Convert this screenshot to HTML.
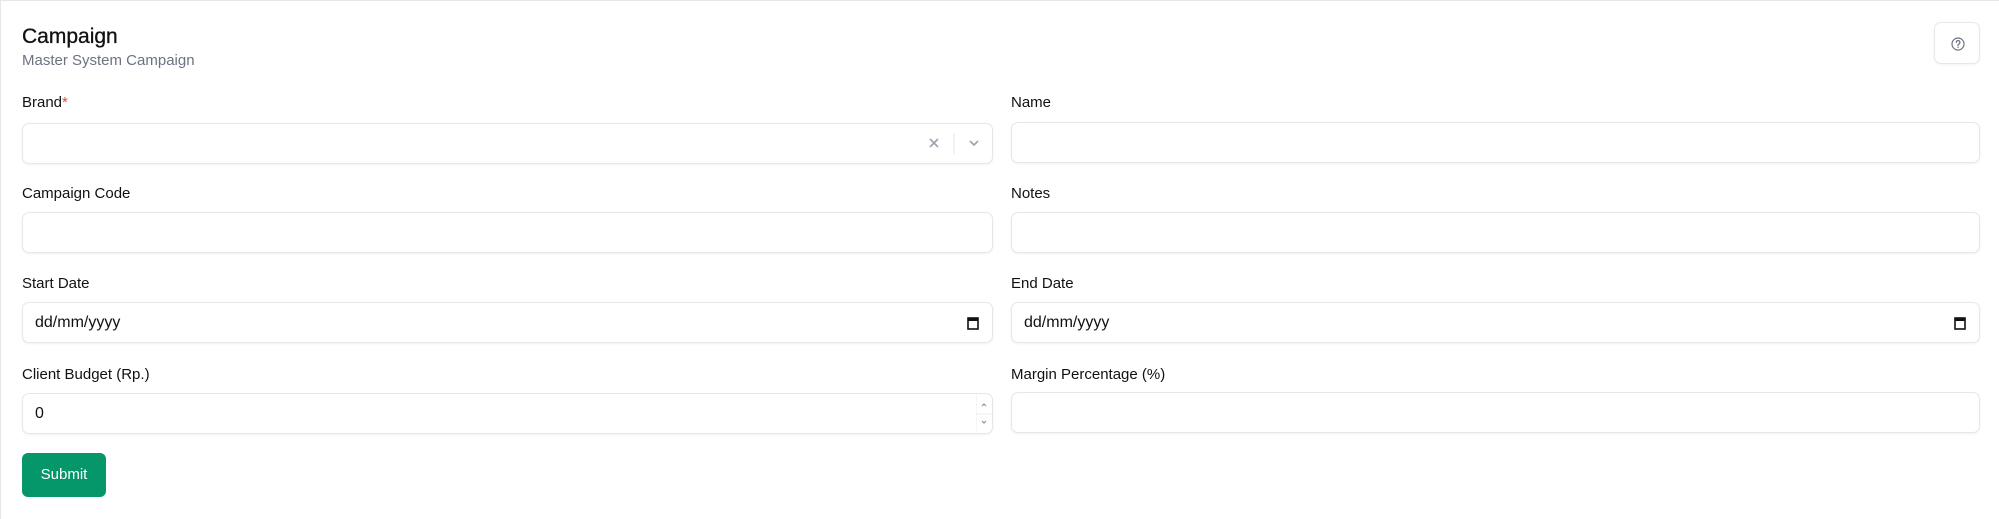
<!DOCTYPE html>
<html><head><meta charset="utf-8"><style>
*{box-sizing:border-box;margin:0;padding:0}
body{width:1999px;height:519px;background:#fff;font-family:"Liberation Sans",sans-serif;color:#111;position:relative;overflow:hidden}
.card{position:absolute;left:0;top:0;width:1999px;height:519px;border-top:1px solid #e5e7eb;border-left:1px solid #e5e7eb}
.abs{position:absolute}
.t{left:22px;top:25px;font-size:21px;font-weight:500;color:#111;-webkit-text-stroke:0.3px #111}
.st{left:22px;top:52px;font-size:15px;color:#6b7280}
.lbl{position:absolute;font-size:15px;font-weight:500;color:#111}
.inp{position:absolute;height:41px;border:1px solid #e5e7eb;border-radius:7px;box-shadow:0 1px 2px rgba(0,0,0,.06);background:#fff;font-size:16px;color:#111;padding-left:12px;line-height:39px}
.L{left:22px;width:971px}.R{left:1011px;width:969px}
.help{left:1934px;top:22px;width:46px;height:42px;border:1px solid #e5e7eb;border-radius:7px;box-shadow:0 1px 2px rgba(0,0,0,.05)}
.btn{left:22px;top:453px;width:84px;height:44px;background:#059669;border-radius:6px;color:#fff;font-size:15px;font-weight:500;text-align:center;line-height:44px}
</style></head><body>
<div class="card"></div>
<div class="abs t">Campaign</div>
<div class="abs st">Master System Campaign</div>
<div class="abs help"><svg width="46" height="42" viewBox="0 0 46 42"><circle cx="23" cy="21" r="6" fill="none" stroke="#6b7280" stroke-width="1.2"/><path d="M21.3 19.4a1.8 1.8 0 1 1 2.4 1.7c-.5.2-.7.6-.7 1.1v.4" fill="none" stroke="#6b7280" stroke-width="1.2" stroke-linecap="round"/><circle cx="23" cy="24.3" r=".7" fill="#6b7280"/></svg></div>

<div class="lbl" style="left:22px;top:94px">Brand<span style="color:#ef4444">*</span></div>
<div class="inp L" style="top:123px"><svg class="abs" style="right:0;top:0" width="80" height="39"><path d="M18 15l8 8M26 15l-8 8" stroke="#9ca3af" stroke-width="1.6"/><path d="M42 9v21" stroke="#e5e7eb" stroke-width="1"/><path d="M58 17l4 4 4-4" fill="none" stroke="#9ca3af" stroke-width="1.6"/></svg></div>
<div class="lbl" style="left:1011px;top:94px">Name</div>
<div class="inp R" style="top:122px"></div>

<div class="lbl" style="left:22px;top:185px">Campaign Code</div>
<div class="inp L" style="top:212px"></div>
<div class="lbl" style="left:1011px;top:185px">Notes</div>
<div class="inp R" style="top:212px"></div>

<div class="lbl" style="left:22px;top:275px">Start Date</div>
<div class="inp L" style="top:302px">dd/mm/yyyy<svg class="abs" style="right:12px;top:12px" width="14" height="16"><rect x="2" y="3" width="10" height="11" fill="none" stroke="#111" stroke-width="1.6"/><rect x="2" y="3" width="10" height="3" fill="#111"/></svg></div>
<div class="lbl" style="left:1011px;top:275px">End Date</div>
<div class="inp R" style="top:302px">dd/mm/yyyy<svg class="abs" style="right:12px;top:12px" width="14" height="16"><rect x="2" y="3" width="10" height="11" fill="none" stroke="#111" stroke-width="1.6"/><rect x="2" y="3" width="10" height="3" fill="#111"/></svg></div>

<div class="lbl" style="left:22px;top:366px">Client Budget (Rp.)</div>
<div class="inp L" style="top:393px">0<svg class="abs" style="right:0;top:0" width="16" height="40"><path d="M0 20h16" stroke="#eee"/><path d="M0 0v40" stroke="#eee"/><path d="M6 12l2-2 2 2M6 27l2 2 2-2" fill="none" stroke="#888" stroke-width="1"/></svg></div>
<div class="lbl" style="left:1011px;top:366px">Margin Percentage (%)</div>
<div class="inp R" style="top:392px"></div>

<div class="abs btn">Submit</div>
</body></html>
